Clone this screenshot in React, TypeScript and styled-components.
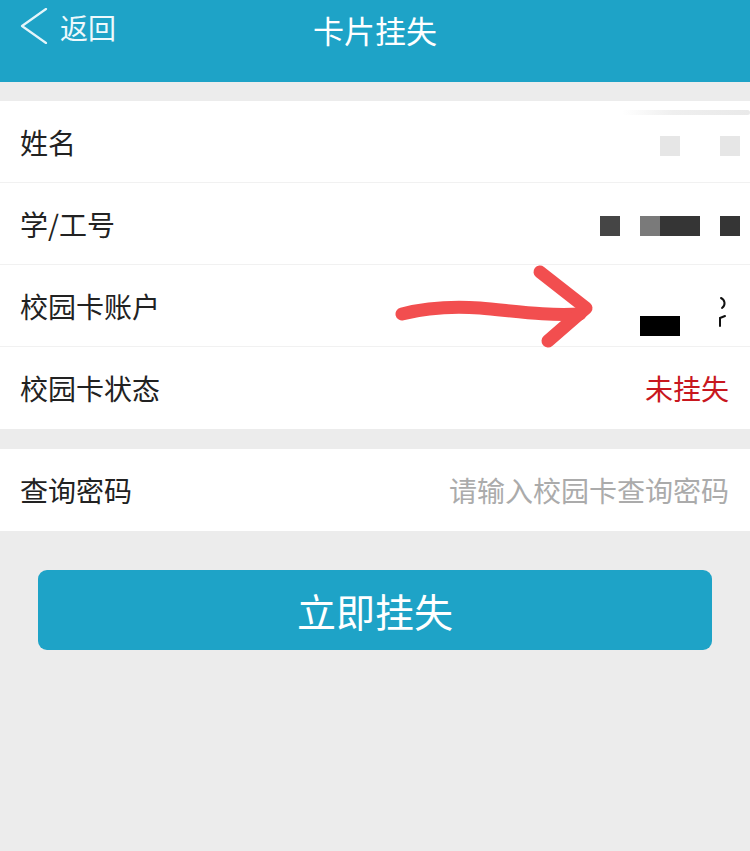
import React from "react";
import styled, { createGlobalStyle } from "styled-components";

const GlobalStyle = createGlobalStyle`
  html, body {
    margin: 0;
    padding: 0;
    background: #ececec;
  }
  body {
    font-family: "Noto Sans CJK SC", "Noto Sans", sans-serif;
  }
`;

type MaskSpec = { x: number; y: number; w: number; h: number; c: string };

const masks: MaskSpec[] = [
  { x: 660, y: 136, w: 20, h: 20, c: "#e6e6e6" },
  { x: 720, y: 136, w: 20, h: 20, c: "#e6e6e6" },
  { x: 600, y: 216, w: 20, h: 20, c: "#454545" },
  { x: 640, y: 216, w: 20, h: 20, c: "#7a7a7a" },
  { x: 660, y: 216, w: 40, h: 20, c: "#353535" },
  { x: 720, y: 216, w: 20, h: 20, c: "#353535" },
  { x: 640, y: 316, w: 40, h: 20, c: "#000000" },
];

const rows = [
  { label: "姓名", value: "" },
  { label: "学/工号", value: "" },
  { label: "校园卡账户", value: "" },
  { label: "校园卡状态", value: "未挂失", alert: true },
];

const App = () => {
  return (
    <Page>
      <GlobalStyle />
      <Header>
        <HeaderBar>
          <Back>
            <svg width="30" height="36" viewBox="0 0 30 36">
              <path d="M28 1 L4 18 L28 35" fill="none" stroke="#e4f5fa" strokeWidth="2.2" strokeLinecap="round" strokeLinejoin="round" />
            </svg>
            <span>返回</span>
          </Back>
          <Title>卡片挂失</Title>
        </HeaderBar>
      </Header>

      <Group>
        {rows.map((row) => (
          <Row key={row.label}>
            <Label>{row.label}</Label>
            <Value $alert={row.alert}>{row.value}</Value>
          </Row>
        ))}
      </Group>

      <Group>
        <Row>
          <Label>查询密码</Label>
          <PasswordInput type="password" placeholder="请输入校园卡查询密码" />
        </Row>
      </Group>

      <ButtonWrap>
        <SubmitButton>立即挂失</SubmitButton>
      </ButtonWrap>

      {/* redaction marks drawn over the screenshot */}
      <Smear />
      {masks.map((m, i) => (
        <Mask key={i} $x={m.x} $y={m.y} $w={m.w} $h={m.h} $c={m.c} />
      ))}
      <Scribble width="14" height="34" viewBox="0 0 14 34">
        <path d="M4 2 C8 4 9 9 5 12" fill="none" stroke="#111" strokeWidth="2" strokeLinecap="round" />
        <path d="M8 20 L3 22 L3 30" fill="none" stroke="#111" strokeWidth="2" strokeLinecap="round" />
      </Scribble>
      <Arrow width="750" height="851" viewBox="0 0 750 851">
        <path
          d="M402 314 C425 308 450 306 480 308 C515 311 545 316 580 314"
          fill="none"
          stroke="#f24e4f"
          strokeWidth="13"
          strokeLinecap="round"
        />
        <path
          d="M540 272 L586 308 L548 341"
          fill="none"
          stroke="#f24e4f"
          strokeWidth="13"
          strokeLinecap="round"
          strokeLinejoin="round"
        />
      </Arrow>
    </Page>
  );
};

const Page = styled.div`
  position: relative;
  width: 750px;
  min-height: 851px;
  background: #ececec;
  overflow: hidden;
`;

const Header = styled.div`
  height: 82px;
  background: #1ea3c7;
  margin-bottom: 19px;
`;

const HeaderBar = styled.div`
  height: 56px;
  display: grid;
  grid-template-columns: 1fr auto 1fr;
  align-items: center;
  color: #ffffff;
`;

const Back = styled.div`
  display: flex;
  align-items: center;
  gap: 12px;
  padding-left: 18px;
  font-size: 28px;
  color: #eef9fc;

  svg {
    margin-top: -4px;
  }
  span {
    line-height: 1;
    margin-top: -2px;
  }
`;

const Title = styled.div`
  font-size: 31px;
  line-height: 1;
  margin-top: 2px;
`;

const Group = styled.div`
  background: #ffffff;
  margin-bottom: 20px;
`;

const Row = styled.div`
  height: 81px;
  display: flex;
  align-items: center;
  justify-content: space-between;
  padding: 0 21px 0 20px;
  border-bottom: 1px solid #f1f1f1;

  &:last-child {
    border-bottom: none;
    height: 82px;
  }
`;

const Label = styled.div`
  font-size: 28px;
  color: #222222;
`;

const Value = styled.div<{ $alert?: boolean }>`
  font-size: 28px;
  color: ${(p) => (p.$alert ? "#c8171e" : "#333333")};
`;

const PasswordInput = styled.input`
  border: none;
  outline: none;
  background: transparent;
  text-align: right;
  width: 320px;
  font-family: inherit;
  font-size: 28px;
  padding: 0;

  &::placeholder {
    color: #ababab;
  }
`;

const ButtonWrap = styled.div`
  padding: 19px 38px 0 38px;
`;

const SubmitButton = styled.button`
  width: 100%;
  height: 80px;
  border: none;
  border-radius: 9px;
  background: #1ea3c7;
  color: #ffffff;
  font-family: inherit;
  font-size: 39px;
  padding: 0;
  cursor: pointer;
`;

const Mask = styled.div<{ $x: number; $y: number; $w: number; $h: number; $c: string }>`
  position: absolute;
  left: ${(p) => p.$x}px;
  top: ${(p) => p.$y}px;
  width: ${(p) => p.$w}px;
  height: ${(p) => p.$h}px;
  background: ${(p) => p.$c};
`;

const Smear = styled.div`
  position: absolute;
  left: 622px;
  top: 110px;
  width: 128px;
  height: 5px;
  border-radius: 3px;
  background: linear-gradient(90deg, rgba(236, 236, 236, 0), #efefef 40%, #e9e9e9);
`;

const Scribble = styled.svg`
  position: absolute;
  left: 717px;
  top: 296px;
`;

const Arrow = styled.svg`
  position: absolute;
  left: 0;
  top: 0;
  pointer-events: none;
`;

export default App;
